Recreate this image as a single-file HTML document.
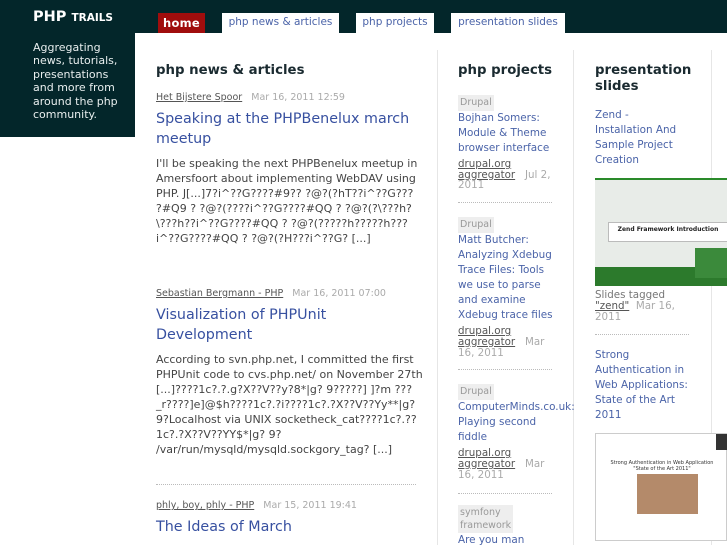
<!DOCTYPE html>
<html><head><meta charset="utf-8"><style>
*{margin:0;padding:0;box-sizing:border-box}
body{width:727px;height:545px;overflow:hidden;background:#fff;font-family:"DejaVu Sans","Liberation Sans",sans-serif;position:relative;color:#444}
.a{position:absolute}
#top{left:0;top:0;width:727px;height:33px;background:#03262a}
#side{left:0;top:0;width:135px;height:137px;background:#03262a}
.logo{left:33px;top:9px;color:#fff;font-weight:bold;font-size:14.5px}
.logo small{font-size:10.5px}
.tag{left:33px;top:41px;color:#e8eeee;font-size:11px;line-height:13.4px;width:88px}
.tab{top:13px;height:20px;background:#fff;color:#4a63a8;font-size:10.5px;padding:3px 0 0;text-align:center}
.home{background:#a00d0d;color:#fff;font-weight:bold;font-size:11.5px;letter-spacing:.3px}
h2{position:absolute;font-size:13.3px;font-weight:bold;color:#1a2a30;line-height:16px}
.vl{top:50px;width:1px;height:495px;background:#e6e6e6}
.meta{font-size:9.5px;color:#aaa}
.meta u{color:#555}
.t{color:#3750a0;font-size:14.3px;line-height:20px}
.p{font-size:11px;line-height:15px;color:#444}
.lk{color:#4a63a8;font-size:10.4px;line-height:15px}
.lb{display:inline-block;background:#eee;color:#999;font-size:9.5px;padding:1px 2px;line-height:14px}
.pm{font-size:10.3px;line-height:10.7px;color:#aaa;margin-top:3px}
.pm u{color:#555}
.dot{border-top:1px dotted #bbb;margin:11px 0 9px;width:94px}
</style></head><body>
<div class="a" id="top"></div><div class="a" id="side"></div>
<div class="a logo">PHP <small>TRAILS</small></div>
<div class="a tag">Aggregating news, tutorials, presentations and more from around the php community.</div>
<div class="a tab home" style="left:158px;width:47px">home</div>
<div class="a tab" style="left:222px;width:117px">php news &amp; articles</div>
<div class="a tab" style="left:356px;width:78px">php projects</div>
<div class="a tab" style="left:451px;width:114px">presentation slides</div>
<div class="a vl" style="left:437px"></div>
<div class="a vl" style="left:573px"></div>
<div class="a vl" style="left:711px"></div>

<h2 style="left:156px;top:63px">php news &amp; articles</h2>
<div class="a meta" style="left:156px;top:92px"><u>Het Bijstere Spoor</u>&nbsp;&nbsp; Mar 16, 2011 12:59</div>
<div class="a t" style="left:156px;top:109px;width:285px">Speaking at the PHPBenelux march meetup</div>
<div class="a p" style="left:156px;top:156px;width:266px">I'll be speaking the next PHPBenelux meetup in Amersfoort about implementing WebDAV using PHP. J[...]7?i^??G????#9?? ?@?(?hT??i^??G??? ?#Q9 ? ?@?(????i^??G????#QQ ? ?@?(?\???h? \???h??i^??G????#QQ ? ?@?(?????h?????h??? i^??G????#QQ ? ?@?(?H???i^??G? [...]</div>
<div class="a meta" style="left:156px;top:288px"><u>Sebastian Bergmann - PHP</u>&nbsp;&nbsp; Mar 16, 2011 07:00</div>
<div class="a t" style="left:156px;top:305px;width:270px">Visualization of PHPUnit Development</div>
<div class="a p" style="left:156px;top:352px;width:274px">According to svn.php.net, I committed the first PHPUnit code to cvs.php.net/ on November 27th [...]????1c?.?.g?X??V??y?8*|g? 9?????] ]?m ??? _r????]e]@$h????1c?.?i????1c?.?X??V??Yy**|g? 9?Localhost via UNIX socketheck_cat????1c?.?? 1c?.?X??V??YY$*|g? 9? /var/run/mysqld/mysqld.sockgory_tag? [...]</div>
<div class="a dot" style="left:156px;top:484px;width:260px;margin:0"></div>
<div class="a meta" style="left:156px;top:500px"><u>phly, boy, phly - PHP</u>&nbsp;&nbsp; Mar 15, 2011 19:41</div>
<div class="a t" style="left:156px;top:517px">The Ideas of March</div>

<h2 style="left:458px;top:63px">php projects</h2>
<div class="a" style="left:458px;top:90px;width:97px">
<span class="lb">Drupal</span>
<div class="lk">Bojhan Somers: Module &amp; Theme browser interface</div>
<div class="pm"><u>drupal.org aggregator</u>&nbsp;&nbsp; Jul 2, 2011</div>
<div class="dot"></div>
<span class="lb">Drupal</span>
<div class="lk">Matt Butcher: Analyzing Xdebug Trace Files: Tools we use to parse and examine Xdebug trace files</div>
<div class="pm"><u>drupal.org aggregator</u>&nbsp;&nbsp; Mar 16, 2011</div>
<div class="dot"></div>
<span class="lb">Drupal</span>
<div class="lk" style="white-space:nowrap">ComputerMinds.co.uk:</div>
<div class="lk">Playing second fiddle</div>
<div class="pm"><u>drupal.org aggregator</u>&nbsp;&nbsp; Mar 16, 2011</div>
<div class="dot" style="margin:13px 0 11px"></div>
<span class="lb" style="line-height:13px">symfony<br>framework</span>
<div class="lk">Are you man</div>
</div>

<h2 style="left:595px;top:63px;width:110px">presentation slides</h2>
<div class="a lk" style="left:595px;top:108px;width:88px">Zend - Installation And Sample Project Creation</div>
<div class="a" style="left:595px;top:178px;width:132px;height:108px;background:#e8ece8;border-top:2px solid #2a8a2a">
<div class="a" style="left:13px;top:42px;width:120px;height:20px;background:#fff;border:1px solid #bbb;font-size:6px;color:#222;text-align:center;line-height:14px;font-weight:bold">Zend Framework Introduction</div>
<div class="a" style="left:0;top:87px;width:132px;height:19px;background:#2c7a2c"></div>
<div class="a" style="left:100px;top:68px;width:32px;height:30px;background:#3b8a3b"></div>
</div>
<div class="a" style="left:595px;top:290px;width:100px;line-height:11px;font-size:10.3px;color:#aaa"><span style="color:#777">Slides tagged</span> <u style="color:#555">"zend"</u>&nbsp; Mar 16, 2011</div>
<div class="a dot" style="left:595px;top:334px;margin:0"></div>
<div class="a lk" style="left:595px;top:348px;width:100px">Strong Authentication in Web Applications: State of the Art 2011</div>
<div class="a" style="left:595px;top:433px;width:132px;height:108px;background:#fff;border:1px solid #ccc">
<div class="a" style="left:0;top:26px;width:132px;font-size:5px;text-align:center;color:#333">Strong Authentication in Web Application<br>"State of the Art 2011"</div>
<div class="a" style="left:41px;top:40px;width:61px;height:40px;background:#b48a6a"></div>
<div class="a" style="left:120px;top:0;width:12px;height:16px;background:#333"></div>
</div>
</body></html>
